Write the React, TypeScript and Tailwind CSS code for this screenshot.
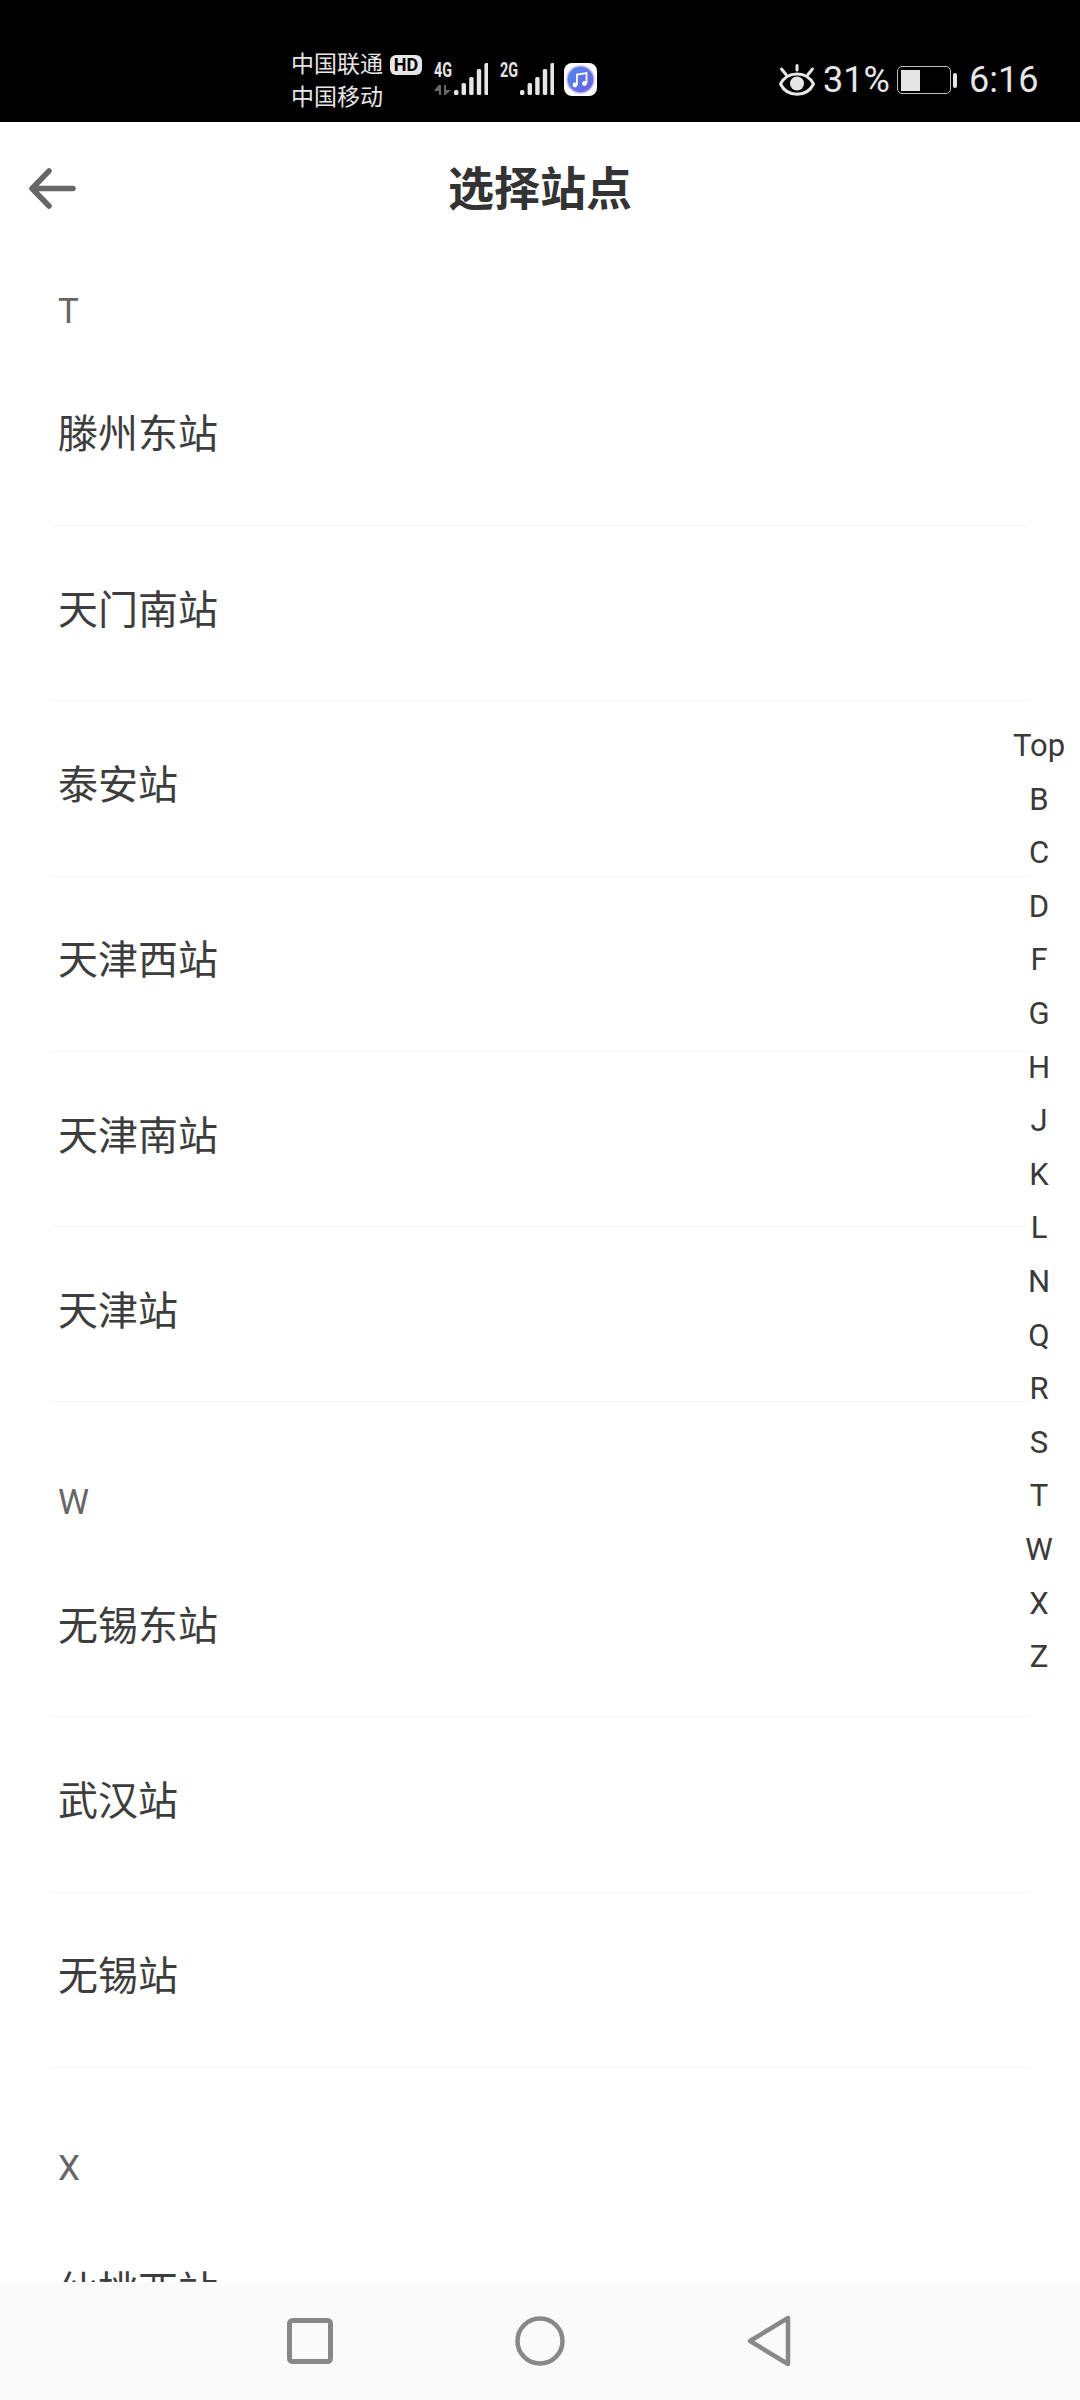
const cjk = "font-['Roboto','Noto_Sans_CJK_SC',sans-serif]";

const sections = [
  { letter: "T", first: true, stations: ["滕州东站", "天门南站", "泰安站", "天津西站", "天津南站", "天津站"] },
  { letter: "W", first: false, stations: ["无锡东站", "武汉站", "无锡站"] },
  { letter: "X", first: false, stations: ["仙桃西站"] },
];

const indexLetters = ["Top", "B", "C", "D", "F", "G", "H", "J", "K", "L", "N", "Q", "R", "S", "T", "W", "X", "Z"];

function Signal({ label, arrows }: { label: string; arrows?: boolean }) {
  const bars = [5, 12, 18, 26, 32];
  return (
    <svg width="54" height="40" viewBox="0 -6 54 40" className="shrink-0">
      <text x="0" y="15" fontSize="20" fontWeight="700" fill="#e6e6e6" fontFamily="Roboto, sans-serif" textLength="18" lengthAdjust="spacingAndGlyphs">
        {label}
      </text>
      {arrows && (
        <g fill="#666">
          <path d="M0 29 L4.5 23 H7 V33 H5 V29 Z" />
          <path d="M10 23 H12 V28 H17 L11.5 33 H10 Z" />
        </g>
      )}
      {bars.map((h, i) => (
        <rect key={i} x={20 + i * 7.6} y={33 - h} width="4.4" height={h} rx="1.6" fill="#e6e6e6" />
      ))}
    </svg>
  );
}

function MusicIcon() {
  return (
    <svg width="33" height="33" viewBox="0 0 33 33" className="shrink-0">
      <defs>
        <linearGradient id="music" x1="0" y1="0" x2="1" y2="1">
          <stop offset="0" stopColor="#4f8df0" />
          <stop offset="1" stopColor="#6a5fd8" />
        </linearGradient>
      </defs>
      <rect width="33" height="33" rx="8" fill="#fff" />
      <circle cx="16.5" cy="16.5" r="13.5" fill="url(#music)" stroke="#c9b6f2" strokeWidth="1.5" />
      <path d="M13 22 V11.5 L22.5 10 V20" fill="none" stroke="#fff" strokeWidth="1.8" />
      <circle cx="11" cy="22" r="2.4" fill="#fff" />
      <circle cx="20.5" cy="20.5" r="2.4" fill="#fff" />
    </svg>
  );
}

function EyeIcon() {
  return (
    <svg width="36" height="32" viewBox="0 0 36 32" fill="none" stroke="#e6e6e6" strokeWidth="3" strokeLinecap="round" className="shrink-0">
      <path d="M1.5 20 C8 6.5 28 6.5 34.5 20 C28 33.5 8 33.5 1.5 20 Z" />
      <circle cx="18" cy="19.5" r="7" fill="#e6e6e6" stroke="none" />
      <path d="M18 1.5 V6 M2.5 5 L7 10.5 M33.5 5 L29 10.5" />
    </svg>
  );
}

function StatusBar() {
  return (
    <div className="h-[122px] shrink-0 bg-black flex items-start text-[#e6e6e6] font-['Roboto','Noto_Sans_CJK_SC',sans-serif] pl-[291px] pr-[44px]">
      <div className="mt-[48px] w-[134px] shrink-0 text-[23px] leading-[33px]">
        <div className="flex items-center gap-[7px]">
          <span>中国联通</span>
          <span className="w-[32px] h-[20px] bg-[#e6e6e6] rounded-[6px] text-black text-[18px] leading-[20px] font-bold text-center">HD</span>
        </div>
        <div>中国移动</div>
      </div>
      <div className="mt-[56px] ml-[9px] flex items-start gap-[12px]">
        <Signal label="4G" arrows />
        <Signal label="2G" />
      </div>
      <div className="mt-[63px] ml-[10px]">
        <MusicIcon />
      </div>
      <div className="ml-auto mt-[62px] flex items-center text-[36px] leading-[36px]">
        <EyeIcon />
        <span className="ml-[8px] w-[68px]">31%</span>
        <div className="ml-[6px] w-[54px] h-[28px] border-[1.5px] border-[#bdbdbd] rounded-[5px] p-[2.5px]">
          <div className="w-[19px] h-full bg-[#e6e6e6]" />
        </div>
        <div className="ml-[2px] w-[4px] h-[15px] rounded-full bg-[#e6e6e6]" />
        <span className="ml-[12px] w-[67px] text-right">6:16</span>
      </div>
    </div>
  );
}

function Header() {
  return (
    <div className="h-[132px] shrink-0 bg-white flex items-center relative">
      <svg width="47" height="41" viewBox="0 0 47 41" fill="none" stroke="#666" strokeWidth="5.5" strokeLinecap="round" strokeLinejoin="round" className="ml-[29px] shrink-0">
        <path d="M44 20.5 H4 M20 3 L3 20.5 L20 38" />
      </svg>
      <div className={`absolute inset-x-0 pt-[2px] text-center text-[46px] font-bold text-[#333] ${cjk}`}>选择站点</div>
    </div>
  );
}

function StationRow({ name }: { name: string }) {
  return (
    <div className="h-[175.3px] mx-[51px] pl-[7px] pb-[5px] flex items-center border-b border-[#f4f4f4] text-[40px] text-[#3d3d3d]">
      {name}
    </div>
  );
}

function SectionLabel({ letter, first }: { letter: string; first: boolean }) {
  return (
    <div className={`${first ? "h-[96.7px]" : "h-[139.7px]"} pl-[58px] pb-[15px] flex items-end text-[35px] leading-[48px] text-[#666]`}>
      {letter}
    </div>
  );
}

export default function App() {
  return (
    <div className="w-[1080px] h-[2400px] flex flex-col overflow-hidden bg-white">
      <StatusBar />
      <Header />
      <div className={`flex-1 min-h-0 overflow-hidden relative ${cjk}`}>
        {sections.map((s) => (
          <div key={s.letter}>
            <SectionLabel letter={s.letter} first={s.first} />
            {s.stations.map((name) => (
              <StationRow key={name} name={name} />
            ))}
          </div>
        ))}
        <div className="absolute right-0 top-[465px] w-[82px] flex flex-col items-center text-[31px] text-[#3a3a3a]">
          {indexLetters.map((l) => (
            <div key={l} className="h-[53.6px] leading-[53.6px]">
              {l}
            </div>
          ))}
        </div>
      </div>
      <div className="h-[118px] shrink-0 bg-[#fafafa] flex items-center pl-[287px] gap-[182px]">
        <svg width="46" height="46" viewBox="0 0 46 46" fill="none" stroke="#888" strokeWidth="5">
          <rect x="2.5" y="2.5" width="41" height="41" rx="3" />
        </svg>
        <svg width="50" height="50" viewBox="0 0 50 50" fill="none" stroke="#888" strokeWidth="4.5">
          <circle cx="25" cy="25" r="22.5" />
        </svg>
        <svg width="44" height="52" viewBox="0 0 44 52" fill="none" stroke="#888" strokeWidth="4.5" strokeLinejoin="round">
          <path d="M41 3 V49 L3 26 Z" />
        </svg>
      </div>
    </div>
  );
}
